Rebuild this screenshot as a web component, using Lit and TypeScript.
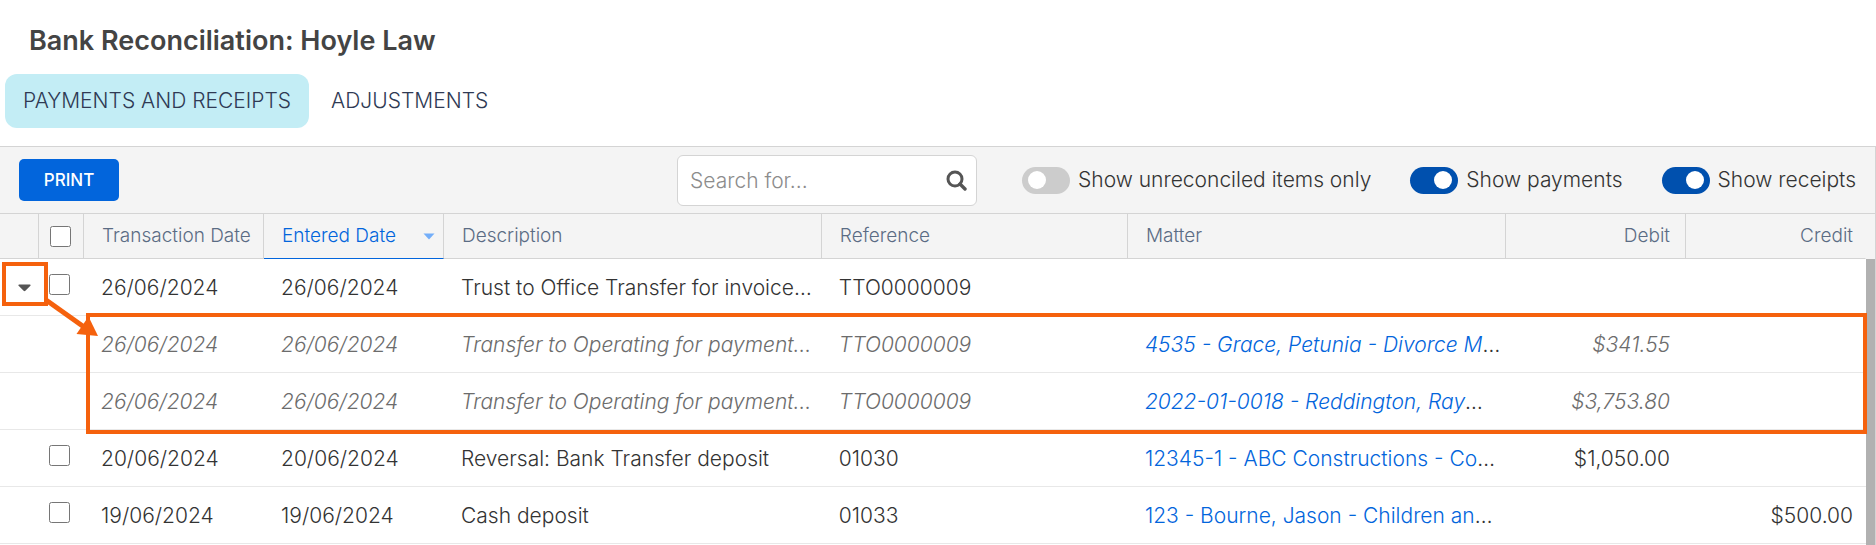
import { LitElement, html, css, nothing } from "lit";
import { customElement, property, state } from "lit/decorators.js";
import { classMap } from "lit/directives/class-map.js";

interface Entry {
  id: string;
  date: string;
  entered: string;
  description: string;
  reference: string;
  matter?: string;
  truncated?: boolean;
  debit?: string;
  credit?: string;
  children?: Entry[];
}

const ENTRIES: Entry[] = [
  {
    id: "a",
    date: "26/06/2024",
    entered: "26/06/2024",
    description: "Trust to Office Transfer for invoice…",
    reference: "TTO0000009",
    children: [
      {
        id: "a1",
        date: "26/06/2024",
        entered: "26/06/2024",
        description: "Transfer to Operating for payment…",
        reference: "TTO0000009",
        matter: "4535 - Grace, Petunia - Divorce M",
        truncated: true,
        debit: "$341.55",
      },
      {
        id: "a2",
        date: "26/06/2024",
        entered: "26/06/2024",
        description: "Transfer to Operating for payment…",
        reference: "TTO0000009",
        matter: "2022-01-0018 - Reddington, Ray",
        truncated: true,
        debit: "$3,753.80",
      },
    ],
  },
  {
    id: "b",
    date: "20/06/2024",
    entered: "20/06/2024",
    description: "Reversal: Bank Transfer deposit",
    reference: "01030",
    matter: "12345-1 - ABC Constructions - Co",
    truncated: true,
    debit: "$1,050.00",
  },
  {
    id: "c",
    date: "19/06/2024",
    entered: "19/06/2024",
    description: "Cash deposit",
    reference: "01033",
    matter: "123 - Bourne, Jason - Children an",
    truncated: true,
    credit: "$500.00",
  },
];

@customElement("toggle-switch")
export class ToggleSwitch extends LitElement {
  @property() label = "";
  @property({ type: Boolean }) checked = false;

  static styles = css`
    :host {
      display: block;
    }
    .toggle {
      display: flex;
      align-items: center;
      gap: 8px;
      white-space: nowrap;
      cursor: pointer;
    }
    .switch {
      appearance: none;
      box-sizing: border-box;
      display: flex;
      align-items: center;
      width: 48px;
      height: 27px;
      margin: 0;
      padding: 0 6px;
      border-radius: 14px;
      background: #cccccc;
      cursor: pointer;
    }
    .switch::before {
      content: "";
      width: 18px;
      height: 18px;
      border-radius: 50%;
      background: #fff;
    }
    .switch:checked {
      justify-content: flex-end;
      background: #0050ae;
    }
  `;

  render() {
    return html`
      <label class="toggle">
        <input class="switch" type="checkbox" role="switch" .checked=${this.checked} />
        <span>${this.label}</span>
      </label>
    `;
  }
}

@customElement("app-root")
export class AppRoot extends LitElement {
  @state() private tab = 0;
  @state() private expanded = true;

  static styles = css`
    :host {
      display: flex;
      flex-direction: column;
      min-height: 100vh;
      background: #fff;
      color: #333;
      font-family: Inter, "Liberation Sans", sans-serif;
      font-size: 21px;
      font-weight: 300;
      line-height: 28px;
    }
    button,
    input {
      font: inherit;
      color: inherit;
    }
    .title {
      margin: 0;
      padding: 25px 29px 17px;
      font-size: 27px;
      font-weight: 600;
      line-height: 32px;
      color: #444;
    }
    .tabs {
      display: flex;
      gap: 4px;
      padding: 0 5px 18px;
    }
    .tab {
      height: 54px;
      padding: 0 18px;
      border: 0;
      border-radius: 12px;
      background: none;
      color: #2f3a54;
      white-space: nowrap;
      cursor: pointer;
    }
    .tab.active {
      background: #c3edf5;
    }
    .panel {
      flex: 1;
      display: flex;
      flex-direction: column;
      border-top: 1px solid #d4d4d4;
      border-right: 1px solid #d4d4d4;
    }
    .toolbar {
      display: flex;
      align-items: center;
      justify-content: space-between;
      height: 66px;
      padding: 0 19px;
      background: #f4f4f4;
      border-bottom: 1px solid #d4d4d4;
    }
    .print {
      width: 100px;
      height: 42px;
      padding: 0;
      border: 0;
      border-radius: 5px;
      background: #0265dc;
      color: #fff;
      font-size: 17px;
      font-weight: 500;
      cursor: pointer;
    }
    .filters {
      display: flex;
      align-items: center;
      gap: 39px;
    }
    .search {
      box-sizing: border-box;
      display: flex;
      align-items: center;
      width: 300px;
      height: 51px;
      margin-right: 6px;
      padding: 0 9px 0 12px;
      border: 1px solid #d4d4d4;
      border-radius: 6px;
      background: #fff;
    }
    .search-box {
      flex: 1;
      min-width: 0;
      padding: 2px 0 0;
      border: 0;
      outline: 0;
      background: none;
    }
    .search-box::placeholder {
      color: #8c8c8c;
      opacity: 1;
    }
    .search-button {
      display: flex;
      padding: 0;
      border: 0;
      background: none;
      cursor: pointer;
    }
    .body {
      flex: 1;
      display: flex;
    }
    .grid {
      position: relative;
      flex: 1;
      min-width: 0;
    }
    .table {
      width: 100%;
      table-layout: fixed;
      border-collapse: separate;
      border-spacing: 0;
    }
    .col-expand {
      width: 39px;
    }
    .col-check {
      width: 45px;
    }
    .col-fixed {
      width: 180px;
    }
    .col-description {
      width: 20.25%;
    }
    .col-reference {
      width: 16.4%;
    }
    .head {
      box-sizing: border-box;
      height: 45px;
      padding: 0 0 0 18px;
      border-right: 1px solid #d4d4d4;
      border-bottom: 1px solid #d4d4d4;
      background: #f4f4f4;
      color: #5b6c84;
      font-size: 19px;
      font-weight: inherit;
      text-align: left;
      white-space: nowrap;
    }
    .head.narrow {
      padding: 1px 0 0 11px;
    }
    .head.amount {
      padding-right: 15px;
      text-align: right;
    }
    .head.last {
      padding-right: 12px;
      border-right-color: #f4f4f4;
    }
    .head.sorted {
      border-bottom-color: #0265dc;
      color: #0265dc;
    }
    .sort {
      display: flex;
      align-items: center;
      justify-content: space-between;
      width: 100%;
      padding: 0 8px 0 0;
      border: 0;
      background: none;
      cursor: pointer;
    }
    .cell {
      box-sizing: border-box;
      height: 57px;
      padding: 2px 0 0 17px;
      border-bottom: 1px solid #e8e8e8;
      overflow: hidden;
      text-overflow: ellipsis;
      white-space: nowrap;
    }
    .cell.narrow {
      padding: 0 0 6px 10px;
    }
    .cell.expander {
      padding: 2px 0 0 18px;
    }
    .cell.amount {
      padding-right: 16px;
      text-align: right;
    }
    .cell.last {
      padding-right: 13px;
    }
    .child .cell {
      color: #6c6c6c;
      font-style: italic;
    }
    .child .more {
      color: #333;
      font-style: normal;
    }
    .link {
      color: #0265dc;
      text-decoration: none;
    }
    .check {
      display: block;
      width: 21px;
      height: 21px;
      margin: 0;
    }
    .toggle-row {
      display: block;
      padding: 0;
      border: 0;
      background: none;
      line-height: 0;
      cursor: pointer;
    }
    .callout {
      position: absolute;
      box-sizing: border-box;
      border: 4px solid #f5610d;
      pointer-events: none;
    }
    .callout.source {
      top: 48px;
      left: 2px;
      width: 46px;
      height: 44px;
    }
    .callout.target {
      top: 99px;
      left: 86px;
      right: -1px;
      height: 121px;
    }
    .arrow {
      position: absolute;
      top: 84px;
      left: 44px;
      pointer-events: none;
    }
    .scroll {
      display: flex;
      flex-direction: column;
      width: 9px;
      background: #f4f4f4;
    }
    .thumb {
      flex: 1;
      margin-top: 45px;
      background: #b1b1b1;
    }
  `;

  private renderRow(entry: Entry, child = false): unknown {
    return html`
      <tr class=${classMap({ child })}>
        <td class="cell expander">
          ${entry.children
            ? html`<button
                class="toggle-row"
                aria-label="Expand"
                aria-expanded=${this.expanded}
                @click=${() => (this.expanded = !this.expanded)}
              >
                <svg width="13" height="8" viewBox="0 0 13 8">
                  <path d="M1 0.5h11q1 0.3 0.4 1.2L7.4 6.8q-0.9 0.9-1.8 0L0.6 1.7Q0 0.8 1 0.5z" fill="#555" />
                </svg>
              </button>`
            : nothing}
        </td>
        <td class="cell narrow">
          ${child ? nothing : html`<input class="check" type="checkbox" aria-label="Select" />`}
        </td>
        <td class="cell">${entry.date}</td>
        <td class="cell">${entry.entered}</td>
        <td class="cell">${entry.description}</td>
        <td class="cell">${entry.reference}</td>
        <td class="cell">
          ${entry.matter ? html`<a class="link" href="#">${entry.matter}</a>` : nothing}${entry.truncated
            ? html`<span class="more">…</span>`
            : nothing}
        </td>
        <td class="cell amount">${entry.debit}</td>
        <td class="cell amount last">${entry.credit}</td>
      </tr>
      ${entry.children && this.expanded ? entry.children.map((c) => this.renderRow(c, true)) : nothing}
    `;
  }

  render() {
    return html`
      <h1 class="title">Bank Reconciliation: Hoyle Law</h1>
      <div class="tabs" role="tablist">
        ${["PAYMENTS AND RECEIPTS", "ADJUSTMENTS"].map(
          (name, i) => html`<button
            role="tab"
            class=${classMap({ tab: true, active: this.tab === i })}
            aria-selected=${this.tab === i}
            @click=${() => (this.tab = i)}
          >
            ${name}
          </button>`
        )}
      </div>
      <div class="panel">
        <div class="toolbar">
          <button class="print">PRINT</button>
          <div class="filters">
            <div class="search">
              <input class="search-box" type="text" placeholder="Search for..." aria-label="Search" />
              <button class="search-button" aria-label="Search">
                <svg width="21" height="21" viewBox="0 0 21 21" fill="none" stroke="#555">
                  <circle cx="9" cy="9" r="7" stroke-width="3" />
                  <path d="M14 14l5 5" stroke-width="3.4" stroke-linecap="round" />
                </svg>
              </button>
            </div>
            <toggle-switch label="Show unreconciled items only"></toggle-switch>
            <toggle-switch label="Show payments" checked></toggle-switch>
            <toggle-switch label="Show receipts" checked></toggle-switch>
          </div>
        </div>
        <div class="body">
          <div class="grid">
            <table class="table">
              <colgroup>
                <col class="col-expand" />
                <col class="col-check" />
                <col class="col-fixed" />
                <col class="col-fixed" />
                <col class="col-description" />
                <col class="col-reference" />
                <col />
                <col class="col-fixed" />
                <col class="col-fixed" />
              </colgroup>
              <thead>
                <tr>
                  <th class="head"></th>
                  <th class="head narrow">
                    <input class="check" type="checkbox" aria-label="Select all" />
                  </th>
                  <th class="head">Transaction Date</th>
                  <th class="head sorted" aria-sort="descending">
                    <button class="sort">
                      Entered Date
                      <svg width="12" height="7" viewBox="0 0 12 7">
                        <path d="M0.5 0.5h11L6 6.5z" fill="#73aef9" />
                      </svg>
                    </button>
                  </th>
                  <th class="head">Description</th>
                  <th class="head">Reference</th>
                  <th class="head">Matter</th>
                  <th class="head amount">Debit</th>
                  <th class="head amount last">Credit</th>
                </tr>
              </thead>
              <tbody>
                ${ENTRIES.map((entry) => this.renderRow(entry))}
              </tbody>
            </table>
            <div class="callout source"></div>
            <div class="callout target"></div>
            <svg class="arrow" width="58" height="44" viewBox="0 0 58 44">
              <path d="M2 2L40 29" stroke="#f5610d" stroke-width="5" />
              <path d="M54 38L32.500 36L44.500 18.500z" fill="#f5610d" />
            </svg>
          </div>
          <div class="scroll"><div class="thumb"></div></div>
        </div>
      </div>
    `;
  }
}
